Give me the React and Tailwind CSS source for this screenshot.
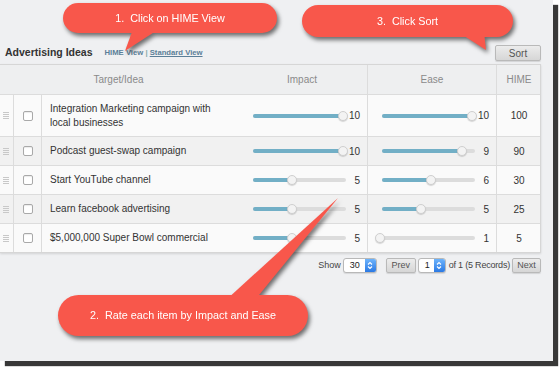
import React from "react";

const rows = [
  { name: ["Integration Marketing campaign with", "local businesses"], impact: 10, ease: 10, hime: 100 },
  { name: ["Podcast guest-swap campaign"], impact: 10, ease: 9, hime: 90 },
  { name: ["Start YouTube channel"], impact: 5, ease: 6, hime: 30 },
  { name: ["Learn facebook advertising"], impact: 5, ease: 5, hime: 25 },
  { name: ["$5,000,000 Super Bowl commercial"], impact: 5, ease: 1, hime: 5 },
];

function Slider({ value }) {
  // thumb centre travels from -2px to 90px over a 93px track
  const pos = -2 + ((value - 1) / 9) * 92;
  return (
    <div className="relative h-[4px] w-[93px] rounded-full bg-[#dcdcdc]">
      <div className="h-full rounded-full bg-[#72afc6]" style={{ width: Math.max(pos, 0) }} />
      <div
        className="absolute top-1/2 h-[10px] w-[10px] -translate-y-1/2 rounded-full border border-[#cfcfcf] bg-[#f3f3f3] shadow-[0_1px_1px_rgba(0,0,0,0.15)]"
        style={{ left: pos - 5 }}
      />
    </div>
  );
}

function Handle() {
  return (
    <div className="flex w-[6px] flex-col gap-[1px]">
      <span className="h-[1px] bg-[#c8c8c8]" />
      <span className="h-[1px] bg-[#c8c8c8]" />
      <span className="h-[1px] bg-[#c8c8c8]" />
      <span className="h-[1px] bg-[#c8c8c8]" />
    </div>
  );
}

function Select({ value, className }) {
  return (
    <div className={`flex h-[15px] overflow-hidden rounded-[3px] border border-[#b8b8b8] bg-white shadow-[0_1px_1px_rgba(0,0,0,0.1)] ${className}`}>
      <span className="flex-1 pl-[6px] text-[9px] leading-[13px] text-[#222]">{value}</span>
      <span className="flex w-[11px] items-center justify-center bg-gradient-to-b from-[#6db3fb] to-[#2a79e4]">
        <svg width="6" height="9" viewBox="0 0 6 9" fill="none" stroke="white" strokeWidth="1.1">
          <path d="M1 3.5 L3 1.5 L5 3.5" />
          <path d="M1 5.5 L3 7.5 L5 5.5" />
        </svg>
      </span>
    </div>
  );
}

function Button({ children, className }) {
  return (
    <div className={`flex items-center justify-center rounded-[2px] border border-[#b9b9b9] bg-gradient-to-b from-[#ececec] to-[#d6d6d6] text-[#555] shadow-[0_1px_1px_rgba(0,0,0,0.12)] ${className}`}>
      {children}
    </div>
  );
}

function Callout({ className, pillClassName, tail, children }) {
  return (
    <div className={`absolute drop-shadow-[2px_3px_2px_rgba(0,0,0,0.55)] ${className}`}>
      <svg className="absolute top-0 left-0 overflow-visible" width="10" height="10">
        <polygon points={tail} fill="#f8574b" />
      </svg>
      <div className={`relative flex items-center justify-center rounded-full bg-[#f8574b] text-[10.8px] whitespace-pre text-white ${pillClassName}`}>
        {children}
      </div>
    </div>
  );
}

export default function App() {
  return (
    <div className="relative h-[369px] w-[560px] overflow-hidden bg-white font-['Liberation_Sans',Arial,sans-serif]">
      <div className="flex h-[361px] w-[553px] flex-col bg-[#eff0f2] pt-[45px] shadow-[5px_5px_1px_rgba(45,45,45,0.95)]">
        <div className="flex h-[16px] items-center justify-between pr-[12px] pl-[5px]">
          <div className="flex items-center">
            <span className="text-[10.5px] font-bold text-[#333]">Advertising Ideas</span>
            <span className="ml-[12px] text-[7.7px] font-bold text-[#5b7f98]">
              HIME View <span className="text-[#8aa]">|</span> <span className="underline">Standard View</span>
            </span>
          </div>
          <Button className="h-[16px] w-[46px] text-[10px]">Sort</Button>
        </div>

        <div className="mt-[3px] w-[541px] border-t border-r border-b border-[#d6d6d6] shadow-[0_1px_2px_rgba(0,0,0,0.12)]">
          <div className="grid h-[29px] grid-cols-[237px_130px_129px_45px] bg-[#eeeff0] text-[10px] text-[#8a8a8a]">
            <div className="flex items-center justify-center">Target/Idea</div>
            <div className="flex items-center justify-center">Impact</div>
            <div className="flex items-center justify-center border-l border-[#dcdcdc]">Ease</div>
            <div className="flex items-center justify-center border-l border-[#dcdcdc]">HIME</div>
          </div>
          {rows.map((r, i) => (
            <div
              key={i}
              className={`grid grid-cols-[14px_28px_195px_130px_129px_45px] border-t border-[#dcdcdc] text-[10px] text-[#333] ${
                i === 0 ? "h-[42px]" : "h-[29px]"
              } ${i % 2 === 1 ? "bg-[#f1f1f1]" : "bg-[#fafafa]"}`}
            >
              <div className="flex items-center justify-center border-r border-[#dcdcdc] pr-[1px]">
                <Handle />
              </div>
              <div className="flex items-center justify-center border-r border-[#dcdcdc]">
                <span className="h-[10px] w-[10px] rounded-[2px] border border-[#a9a9a9] bg-white shadow-[inset_0_1px_1px_rgba(0,0,0,0.08)]" />
              </div>
              <div className="flex flex-col justify-center pl-[8px] leading-[14px]">
                {r.name.map((l) => (
                  <span key={l}>{l}</span>
                ))}
              </div>
              <div className="flex items-center pl-[16px]">
                <Slider value={r.impact} />
                <span className="w-[14px] text-right">{r.impact}</span>
              </div>
              <div className="flex items-center border-l border-[#dcdcdc] pl-[14px]">
                <Slider value={r.ease} />
                <span className="w-[14px] text-right">{r.ease}</span>
              </div>
              <div className="flex items-center justify-center border-l border-[#dcdcdc]">{r.hime}</div>
            </div>
          ))}
        </div>

        <div className="mt-[5px] flex w-[541px] items-center justify-end text-[9px] text-[#444]">
          <span>Show</span>
          <Select value="30" className="ml-[2px] w-[34px]" />
          <Button className="ml-[9px] h-[15px] w-[30px] text-[9px]">Prev</Button>
          <Select value="1" className="ml-[2px] w-[28px]" />
          <span className="ml-[3px] tracking-[-0.2px]">of 1 (5 Records)</span>
          <Button className="ml-[2px] h-[15px] w-[29px] text-[9px]">Next</Button>
        </div>
      </div>

      <Callout className="top-[3px] left-[63px]" pillClassName="h-[30px] w-[214px]" tail="70,26 96,26 62,48">
        {"1.  Click on HIME View"}
      </Callout>

      <Callout className="top-[5px] left-[302px]" pillClassName="h-[32px] w-[211px]" tail="156,27 182,27 184,45">
        {"3.  Click Sort"}
      </Callout>

      <Callout className="top-[295px] left-[58px]" pillClassName="h-[41px] w-[250px]" tail="168,5 197,5 280,-97">
        {"2.  Rate each item by Impact and Ease"}
      </Callout>
    </div>
  );
}
